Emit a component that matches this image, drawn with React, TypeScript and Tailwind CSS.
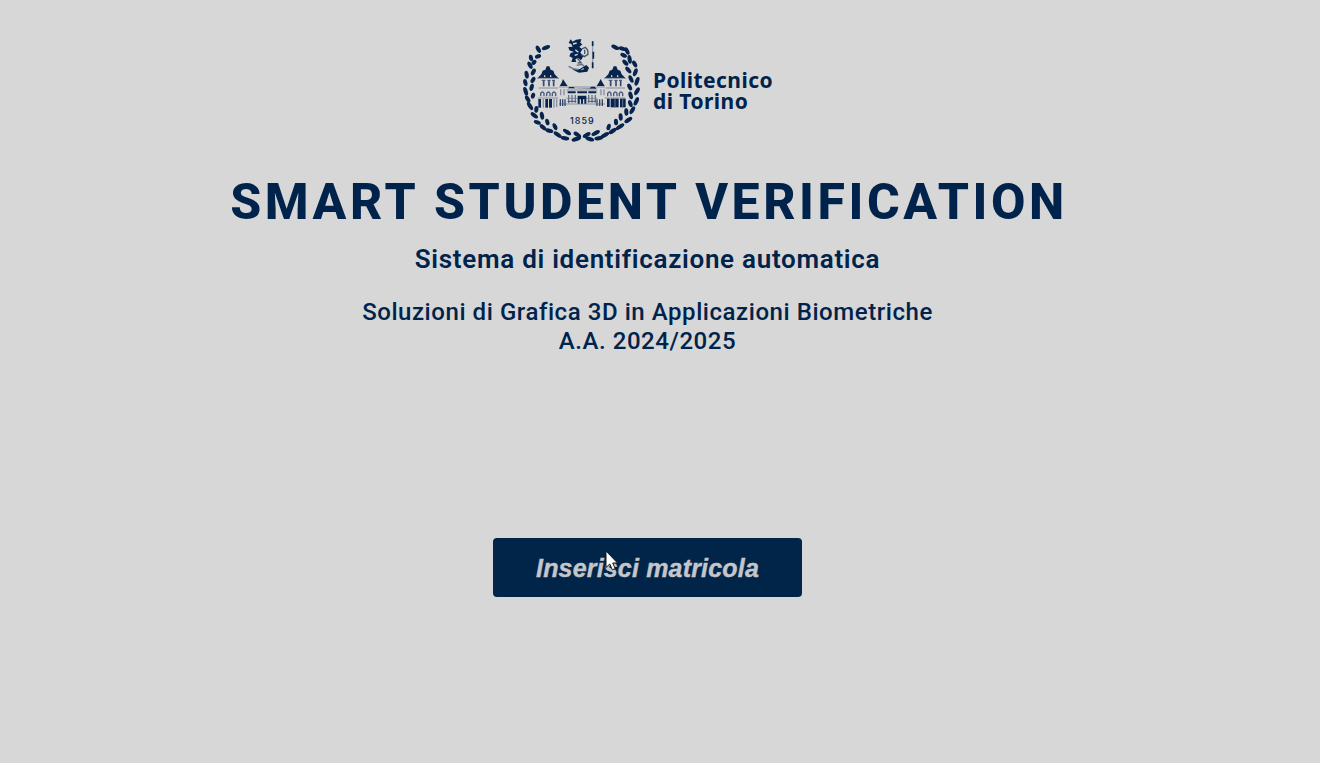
type Leaf = [x: number, y: number, angle: number, length: number];

// Laurel leaves: centre, rotation and length, in crest units.
const leaves: Leaf[] = [
  [93, 53, -22, 26], [70, 58, 62, 24], [69, 79, -20, 19], [48, 84, 80, 20],
  [57, 97, -50, 17], [45, 106, 62, 24], [55, 126, -62, 22], [35, 134, 80, 24],
  [54, 150, -60, 20], [31, 158, 78, 22], [50, 172, -75, 22], [32, 184, 72, 27],
  [54, 197, -75, 18], [38, 207, 60, 24], [45, 228, 58, 28], [64, 238, -85, 20],
  [58, 256, 38, 26], [81, 257, 80, 24], [67, 277, 20, 22], [84, 292, 42, 24],
  [97, 276, 75, 20], [103, 302, 15, 24], [120, 290, 65, 22], [128, 314, 35, 28],
  [156, 306, 35, 28], [150, 325, 10, 26], [187, 314, 35, 26], [184, 327, -18, 30],
  [301, 52, 24, 26], [322, 56, 20, 22], [336, 63, 65, 24], [326, 76, 25, 21],
  [344, 88, 80, 26], [331, 98, 45, 22], [359, 102, 60, 22], [340, 120, 50, 24],
  [361, 127, -70, 25], [348, 147, 65, 24], [366, 154, -70, 27], [344, 171, 65, 22],
  [366, 184, -60, 26], [347, 196, 75, 24], [364, 214, -65, 27], [346, 221, 70, 22],
  [352, 241, -60, 26], [334, 246, 85, 22], [340, 270, -35, 27], [317, 261, 85, 22],
  [315, 290, -35, 30], [303, 276, 85, 20], [293, 303, -35, 27], [281, 291, -75, 20],
  [269, 316, -30, 30], [242, 309, -30, 28], [251, 325, -10, 26], [215, 315, -30, 26],
  [224, 327, 18, 28],
];

function Tower({ x }: { x: number }) {
  return (
    <g transform={`translate(${x} 0)`}>
      <path d="M-31 144 L-20 133 L-16 122 L-8 119 L-4 109 H4 L8 119 L16 122 L20 133 L31 144 Z" />
      <path d="M-12 141 V136 H-8 V141 M6 141 V136 H10 V141" fill="#d7d7d7" />
      <path d="M-33 145 H33 M-28 174 H30" stroke="#8790a0" strokeWidth="3" />
      <path d="M-13 152 V169 M3 152 V169 M17 152 V169" stroke="#35486a" strokeWidth="5" />
      <path d="M-19 151 H-8 M-2 151 H8 M12 151 H21" stroke="#35486a" strokeWidth="3" />
      <path d="M-22 199 V190 Q-17 182 -12 190 V199 M-4 199 V190 Q1 182 6 190 V199 M13 199 V190 Q18 182 23 190 V199" fill="none" stroke="#4a5a76" strokeWidth="4" />
      <path d="M-31 204 H31" stroke="#8790a0" strokeWidth="3" />
    </g>
  );
}

function Crest() {
  return (
    <svg className="h-[120px] w-[135px] shrink-0" viewBox="0 0 405 360" fill="#06244d" role="img" aria-label="Politecnico di Torino">
      {leaves.map(([x, y, angle, length], i) => (
        <ellipse key={i} cx={x} cy={y} rx={length / 2} ry="6.2" transform={`rotate(${angle} ${x} ${y})`} />
      ))}

      {/* Rampant figure and staff */}
      <path d="M161 39 L167 28 L173 35 L183 29 L199 27 L196 38 L202 43 L193 51 L202 58 L196 68 L205 79 L198 91 L189 84 L181 88 L184 96 L169 96 L173 84 L163 79 L167 69 L177 66 L163 61 L160 51 L173 50 L169 42 Z" />
      <path d="M174 42 L185 39 M181 59 L190 67 M179 76 L188 73" stroke="#d7d7d7" strokeWidth="4" />
      <path d="M200 57 L211 52 L218 60 L219 73 L208 80 L199 74 M209 59 V72 M187 85 L198 98 L188 99" fill="none" stroke="#42536e" strokeWidth="4" />
      <path d="M161 109 L177 117 L193 119 M185 106 L201 103 L207 109" fill="none" stroke="#62708a" strokeWidth="4" />
      <path d="M171 118 L188 121 L203 112 L214 105 L222 113 L217 125 L192 128 Z" />
      <path d="M199 119 L207 116" stroke="#d7d7d7" strokeWidth="3" />
      <path d="M233 34 V113" stroke="#8790a0" strokeWidth="3" />
      <path d="M233 34 V48 M235 65 V86 M233 97 V115" stroke="#06244d" strokeWidth="5" />

      {/* Castle */}
      <Tower x={99} />
      <Tower x={300} />
      <g>
        <rect x="70" y="207" width="8" height="26" />
        <rect x="83" y="207" width="4" height="26" fill="#8790a0" />
        <rect x="91" y="207" width="8" height="26" />
        <rect x="102" y="207" width="9" height="26" />
        <rect x="115" y="207" width="4" height="26" fill="#8790a0" />
        <rect x="123" y="207" width="4" height="24" fill="#8790a0" />
        <rect x="276" y="206" width="8" height="25" />
        <rect x="287" y="206" width="24" height="26" />
        <rect x="315" y="206" width="17" height="26" />
        <path d="M300 207 V232 M323 207 V232" stroke="#66738a" strokeWidth="3" />
      </g>
      <path d="M134 168 L140 158 L144 147 L151 158 L158 168 Z M245 168 L251 158 L257 147 L263 158 L269 168 Z" />
      <path d="M132 171 H270 M154 180 H247 M154 205 H247 M132 222 H270" stroke="#8790a0" strokeWidth="3" />
      <path d="M158 175 L164 171 H176 L180 175 H224 L229 170 H239 L245 176 Z" />
      <path d="M158 187 H182 M187 187 H216 M220 187 H244" stroke="#06244d" strokeWidth="6" />
      <path d="M137 178 V196 M147 178 V196 M258 178 V196 M267 178 V196" stroke="#8790a0" strokeWidth="4" />
      <path d="M136 208 V228 M143 208 V228 M150 208 V228 M246 208 V228 M254 208 V228 M262 208 V228" stroke="#35486a" strokeWidth="4" />
      <path d="M161 195 V220 M171 195 V218 M181 195 V218 M221 195 V218 M231 195 V218 M241 195 V218" stroke="#68758d" strokeWidth="4" />
      <path d="M188 221 V197 H214 V221 H208 V208 H204 V221 H198 V208 H194 V221 Z" />
      <path d="M158 214 H184 M218 214 H243" stroke="#42536e" strokeWidth="3" />

      <text x="165" y="281" fontFamily="Inter, sans-serif" fontSize="27" fontWeight="500" textLength="71">1859</text>
    </svg>
  );
}

function Pointer() {
  return (
    <svg className="pointer-events-none absolute top-[12px] left-[112px] h-[22px] w-[15px]" viewBox="0 0 15 22" aria-hidden="true">
      <path d="M1 1 V17.5 L4.8 14 L7.3 19.8 L10.2 18.6 L7.7 13 H12.5 Z" fill="#fff" stroke="#101820" strokeWidth="1" />
    </svg>
  );
}

export default function App() {
  return (
    <main className="h-[763px] w-full overflow-hidden bg-[#d7d7d7] pt-[30px] pr-[25px] font-['Roboto',sans-serif] text-[#00234b]">
      <div className="flex flex-col items-center">
        <header className="flex h-[120px] w-[265px] items-start">
          <Crest />
          <p className="pt-[40px] pl-[3px] font-['Noto_Sans',sans-serif] text-[21px] leading-[20.5px] font-bold tracking-[0.45px] whitespace-nowrap">
            Politecnico
            <br />
            di Torino
          </p>
        </header>
        <h1 className="mt-[23px] pl-[3px] text-[50px] leading-[58px] font-extrabold tracking-[3.56px] whitespace-nowrap">
          SMART STUDENT VERIFICATION
        </h1>
        <p className="mt-[13px] text-[26px] leading-[30px] font-semibold tracking-[0.71px] whitespace-nowrap">
          Sistema di identificazione automatica
        </p>
        <p className="mt-[24px] text-center text-[24px] leading-[29px] font-medium tracking-[0.56px] whitespace-nowrap">
          Soluzioni di Grafica 3D in Applicazioni Biometriche
          <br />
          A.A. 2024/2025
        </p>
        <button className="relative mt-[182px] h-[59px] w-[309px] rounded-[4px] bg-[#002548] pt-[2px] font-['Liberation_Sans',sans-serif] text-[25px] font-bold tracking-[0.18px] text-[#c5c6cc] italic [-webkit-text-stroke:0.4px_#c5c6cc]">
          Inserisci matricola
          <Pointer />
        </button>
      </div>
    </main>
  );
}
